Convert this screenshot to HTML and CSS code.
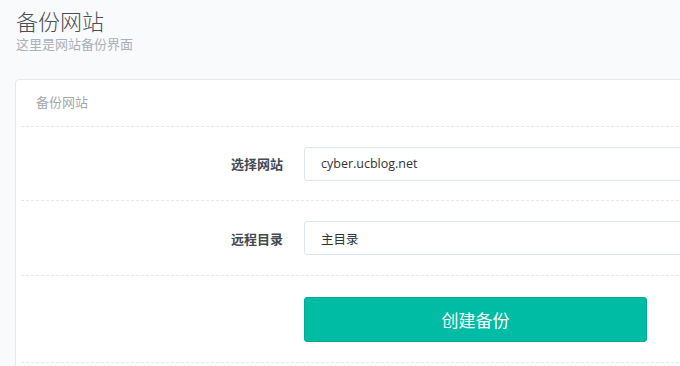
FILE: index.html
```html
<!DOCTYPE html>
<html lang="zh-CN">
<head>
    <meta charset="UTF-8">
    <meta name="viewport" content="width=device-width, initial-scale=1.0">
    <title>备份网站</title>
    <link rel="stylesheet" href="styles.css">
</head>
<body>

<div class="page-header">
    <h1>备份网站</h1>
    <p class="subtitle">这里是网站备份界面</p>
</div>

<div class="card">
    <div class="card-title">备份网站</div>
    <div class="card-body">
        <div class="form-row">
            <label for="site">选择网站</label>
            <div class="field"><input type="text" id="site" value="cyber.ucblog.net"></div>
        </div>
        <div class="form-row">
            <label for="remote-dir">远程目录</label>
            <div class="field"><input type="text" id="remote-dir" value="主目录"></div>
        </div>
        <div class="form-row actions">
            <div class="spacer"></div>
            <button type="button">创建备份</button>
        </div>
    </div>
</div>

</body>
</html>
```

FILE: styles.css
```css
body {
    font-family: "Open Sans", "Noto Sans CJK SC", sans-serif;
    margin: 0;
    padding: 0 0 0 15px;
    background-color: #f9fafc;
    overflow: hidden;
    color: #333;
}
.page-header {
    padding: 6px 0 0 1px;
    height: 79px;
    box-sizing: border-box;
}
h1 {
    margin: 0;
    font-size: 22px;
    font-weight: 300;
    line-height: 30px;
    color: #4a4f55;
}
.subtitle {
    margin: 0;
    font-size: 13px;
    line-height: 17px;
    color: #aab0b7;
}
.card {
    background-color: white;
    border: 1px solid #e3e8ee;
    border-radius: 4px;
    width: 800px;
    box-sizing: border-box;
    padding: 0 5px 30px;
}
.card-title {
    height: 46px;
    line-height: 44px;
    padding-left: 15px;
    font-size: 13px;
    color: #a3a8ae;
    border-bottom: 1px dashed #e3e8ee;
}
.form-row {
    display: flex;
    align-items: center;
    height: 74px;
    border-bottom: 1px dashed #e3e8ee;
}
.form-row:first-child {
    height: 73px;
}
.form-row.actions {
    height: 86px;
}
.form-row label,
.spacer {
    width: 283px;
    flex-shrink: 0;
    text-align: right;
    font-size: 13px;
    font-weight: bold;
    color: #444a52;
    padding-right: 21px;
    box-sizing: border-box;
}
.field {
    flex: 1;
}
input {
    width: 100%;
    height: 34px;
    padding: 0 16px;
    border: 1px solid #dde5ee;
    border-radius: 3px;
    box-sizing: border-box;
    font-family: inherit;
    font-size: 12.5px;
    color: #333;
}
button {
    width: 343px;
    height: 45px;
    background-color: #00bca4;
    border: 1px solid #00aa93;
    border-radius: 3px;
    color: white;
    font-family: inherit;
    font-size: 17px;
    cursor: pointer;
}
button:hover {
    background-color: #00a892;
}
```
